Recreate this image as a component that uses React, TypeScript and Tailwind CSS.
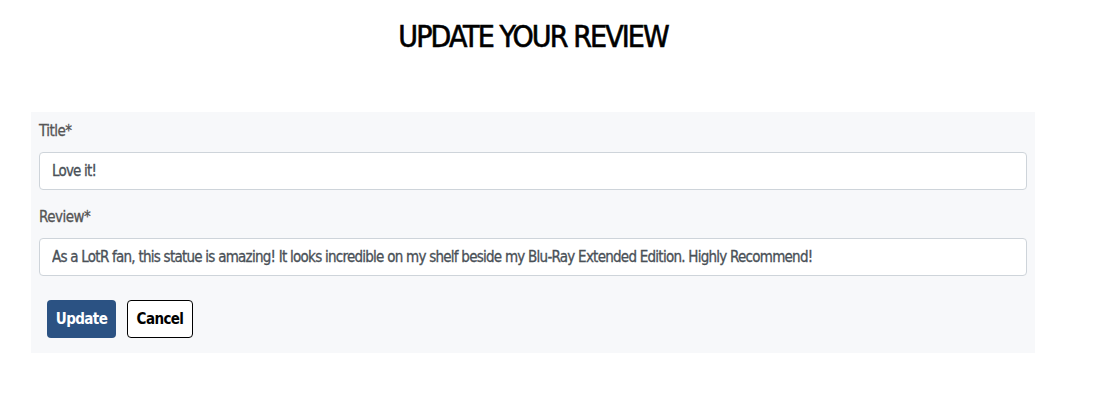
export default function App() {
  const font = { fontFamily: '"DejaVu Sans Condensed", "DejaVu Sans", sans-serif', fontStretch: "condensed" };
  return (
    <div className="h-[414px] w-[1100px] bg-white" style={font}>
      <div className="ml-[31px] w-[1004px]">
        <h1 className="pt-[17px] text-center text-[30px] leading-[40px] font-normal tracking-[-1.9px] text-black [-webkit-text-stroke:0.6px_black]">
          UPDATE YOUR REVIEW
        </h1>
        <form className="mt-[55px] bg-[#f7f8fa] px-2 pt-[7px] pb-[15px]">
          <label className="mb-[9px] block text-[15px] leading-[24px] text-[#555] tracking-[-0.5px] [-webkit-text-stroke:0.3px_#555]">Title*</label>
          <input
            className="block h-[38px] w-full rounded border border-[#ced4da] bg-white px-3 text-[15px] tracking-[-0.8px] text-[#495057] [-webkit-text-stroke:0.3px_#495057]"
            style={font}
            defaultValue="Love it!"
          />
          <label className="mt-[15px] mb-[9px] block text-[15px] leading-[24px] text-[#555] tracking-[-0.5px] [-webkit-text-stroke:0.3px_#555]">Review*</label>
          <input
            className="block h-[38px] w-full rounded border border-[#ced4da] bg-white px-3 text-[15px] tracking-[-0.75px] text-[#495057] [-webkit-text-stroke:0.3px_#495057]"
            style={font}
            defaultValue="As a LotR fan, this statue is amazing! It looks incredible on my shelf beside my Blu-Ray Extended Edition. Highly Recommend!"
          />
          <div className="mt-[24px] flex gap-[11px] pl-2">
            <button type="button" className="h-[38px] w-[69px] rounded bg-[#2b5283] text-[15px] font-bold tracking-[-0.6px] text-white">
              Update
            </button>
            <button type="button" className="h-[38px] w-[66px] rounded border border-black bg-white text-[15px] font-bold tracking-[-0.6px] text-black">
              Cancel
            </button>
          </div>
        </form>
      </div>
    </div>
  );
}
